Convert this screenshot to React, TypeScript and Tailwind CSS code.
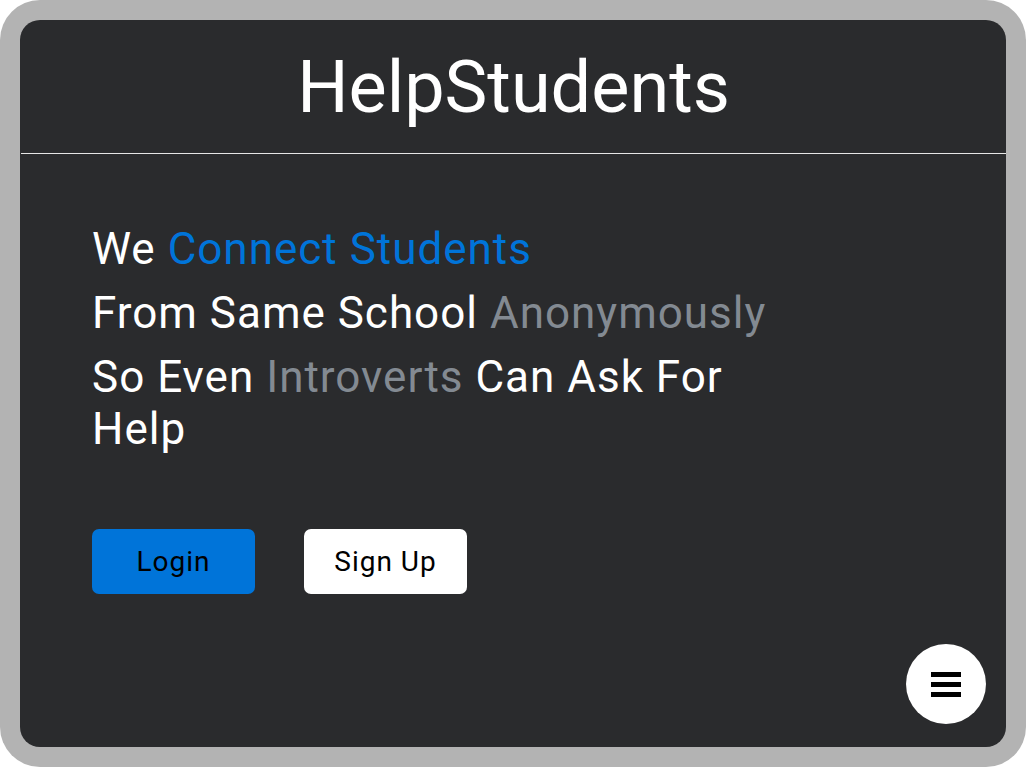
import React from "react";

export default function App() {
  return (
    <div className="w-[1026px] h-[768px] bg-white" style={{ fontFamily: "Roboto, 'Noto Sans', sans-serif" }}>
      <div className="w-[1026px] h-[767px] bg-[#b3b3b3] rounded-[40px] p-[20px]">
        <div className="relative w-full h-full bg-[#2a2b2d] rounded-[20px] flex flex-col">
          <header className="h-[134px] flex items-center justify-center border-b border-[#e6e6e6] ml-px">
            <h1 className="text-white text-[72px] leading-none font-normal pt-[2px]">HelpStudents</h1>
          </header>
          <main className="pl-[72px] pt-[69px]">
            <div className="max-w-[720px] text-white text-[44px] leading-[1.2] tracking-[1px] flex flex-col gap-[11px]">
              <p>
                We <span className="text-[#0074d9]">Connect Students</span>
              </p>
              <p>
                From Same School <span className="text-[#838a92]">Anonymously</span>
              </p>
              <p>
                So Even <span className="text-[#838a92]">Introverts</span> Can Ask For Help
              </p>
            </div>
            <div className="flex gap-[49px] mt-[73px]">
              <button className="w-[163px] h-[65px] rounded-[7px] bg-[#0074d9] text-black text-[28px] tracking-[1px]">Login</button>
              <button className="w-[163px] h-[65px] rounded-[7px] bg-white text-black text-[28px] tracking-[1px]">Sign Up</button>
            </div>
          </main>
          <button className="absolute right-[20px] bottom-[23px] w-[80px] h-[80px] rounded-full bg-white flex flex-col items-center justify-center gap-[5px]">
            <span className="block w-[30px] h-[5px] bg-black" />
            <span className="block w-[30px] h-[5px] bg-black" />
            <span className="block w-[30px] h-[5px] bg-black" />
          </button>
        </div>
      </div>
    </div>
  );
}
